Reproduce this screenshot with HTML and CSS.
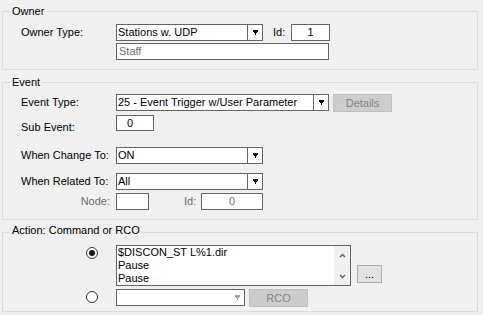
FILE: index.html
```html
<!DOCTYPE html>
<html>
<head>
<meta charset="utf-8">
<link rel="stylesheet" href="styles.css">
</head>
<body>
<div class="page">
  <fieldset class="group owner">
    <legend>Owner</legend>
    <div class="row r-own1">
      <span class="lbl">Owner Type:</span>
      <div class="combo w147"><span class="val">Stations w. UDP</span><span class="dd"><svg width="5" height="5" viewBox="0 0 5 5"><path d="M0 0h5v2h-1v1h-1v2h-1v-2h-1v-1h-1z"/></svg></span></div>
      <span class="lbl-s id1">Id:</span>
      <div class="box idbox">1</div>
    </div>
    <div class="row r-own2">
      <span class="lbl"></span>
      <div class="box staff">Staff</div>
    </div>
  </fieldset>

  <fieldset class="group event">
    <legend>Event</legend>
    <div class="row r-ev1">
      <span class="lbl">Event Type:</span>
      <div class="combo w213"><span class="val">25 - Event Trigger w/User Parameter</span><span class="dd"><svg width="5" height="5" viewBox="0 0 5 5"><path d="M0 0h5v2h-1v1h-1v2h-1v-2h-1v-1h-1z"/></svg></span></div>
      <div class="btn dis details">Details</div>
    </div>
    <div class="row r-ev2">
      <span class="lbl sub">Sub Event:</span>
      <div class="box subbox">0</div>
    </div>
    <div class="row r-ev3">
      <span class="lbl">When Change To:</span>
      <div class="combo w147"><span class="val">ON</span><span class="dd"><svg width="5" height="5" viewBox="0 0 5 5"><path d="M0 0h5v2h-1v1h-1v2h-1v-2h-1v-1h-1z"/></svg></span></div>
    </div>
    <div class="row r-ev4">
      <span class="lbl">When Related To:</span>
      <div class="combo w147"><span class="val">All</span><span class="dd"><svg width="5" height="5" viewBox="0 0 5 5"><path d="M0 0h5v2h-1v1h-1v2h-1v-2h-1v-1h-1z"/></svg></span></div>
    </div>
    <div class="row r-ev5">
      <span class="lbl right gray">Node:</span>
      <div class="box nodebox"></div>
      <span class="lbl-s gray id2">Id:</span>
      <div class="box id2box gray">0</div>
    </div>
  </fieldset>

  <fieldset class="group action">
    <legend>Action: Command or RCO</legend>
    <div class="row r-ac1">
      <span class="radio on"></span>
      <div class="list">
        <div class="lines">
          <div>$DISCON_ST L%1.dir</div>
          <div>Pause</div>
          <div>Pause</div>
        </div>
        <div class="sb">
          <svg width="7" height="5" viewBox="0 0 7 5"><path d="M1 4L3.5 1.5L6 4" fill="none" stroke="#606060" stroke-width="1.4"/></svg>
          <svg width="7" height="5" viewBox="0 0 7 5"><path d="M1 1L3.5 3.5L6 1" fill="none" stroke="#606060" stroke-width="1.4"/></svg>
        </div>
      </div>
      <div class="btn dots">...</div>
    </div>
    <div class="row r-ac2">
      <span class="radio"></span>
      <div class="combo w129 disc"><span class="val"></span><span class="dd"><svg width="5" height="5" viewBox="0 0 5 5"><path d="M0 0h5v2h-1v1h-1v2h-1v-2h-1v-1h-1z"/></svg></span></div>
      <div class="btn dis rco">RCO</div>
    </div>
  </fieldset>
</div>
</body>
</html>
```

FILE: styles.css
```css
html, body {
  margin: 0;
  padding: 0;
  background: #f0f0f0;
}
body {
  font-family: "Liberation Sans", Arial, sans-serif;
  font-size: 11px;
  line-height: 13px;
  color: #000;
  width: 483px;
  height: 315px;
  overflow: hidden;
}
.page {
  padding: 5px 5px 0 2px;
}
.group {
  margin: 0;
  padding: 0;
  border: 1px solid #dcdcdc;
  min-inline-size: 0;
}
.group legend {
  margin-left: 7px;
  padding: 0 2px;
  line-height: 13px;
}
.owner { padding: 6px 0 9px; }
.event { margin-top: 6px; padding: 5px 0 9px; }
.action { margin-top: 4px; padding: 5px 0 4px; }
.action legend { padding-bottom: 3px; }

.row {
  display: flex;
  align-items: flex-start;
  padding-left: 18px;
}
.lbl {
  flex: none;
  width: 95px;
  line-height: 17px;
}
.lbl.right { text-align: right; width: 89px; padding-right: 6px; }
.lbl.sub { padding-top: 6px; line-height: 13px; }
.lbl-s { flex: none; line-height: 17px; }
.gray { color: #6d6d6d; }

.r-own1 { height: 17px; margin-bottom: 2px; }
.r-own2 { height: 17px; }
.r-ev1 { height: 21px; }
.r-ev2 { height: 32px; }
.r-ev3 { height: 26px; }
.r-ev4 { height: 20px; }
.r-ev5 { height: 17px; }

.combo {
  flex: none;
  box-sizing: border-box;
  height: 17px;
  border: 1px solid #646464;
  background: #fff;
  display: flex;
}
.combo .val {
  flex: 1;
  padding-left: 1px;
  line-height: 15px;
  white-space: nowrap;
  overflow: hidden;
}
.combo .dd {
  flex: none;
  width: 14px;
  border-left: 1px solid #646464;
  display: flex;
  align-items: center;
  justify-content: center;
}
.combo .dd svg { shape-rendering: crispEdges; fill: #000; }
.combo.disc .dd { border-left-color: #fff; }
.combo.disc .dd svg { fill: #a0a0a0; }
.w147 { width: 147px; }
.w213 { width: 213px; }
.w129 { width: 129px; }

.box {
  flex: none;
  box-sizing: border-box;
  height: 17px;
  border: 1px solid #646464;
  background: #fff;
  line-height: 15px;
  padding-left: 1px;
}
.id1 { margin-left: 10px; width: 18px; }
.idbox { width: 39px; text-align: center; padding-left: 0; }
.staff { width: 213px; color: #6d6d6d; padding-left: 2px; }
.subbox { width: 38px; height: 16px; line-height: 14px; padding-left: 10px; }
.nodebox { width: 33px; }
.id2 { margin-left: 35px; width: 17px; }
.id2box { width: 62px; text-align: center; padding-left: 0; }

.btn {
  flex: none;
  box-sizing: border-box;
  height: 18px;
  line-height: 16px;
  text-align: center;
}
.btn.dis {
  background: #cccccc;
  border: 1px solid #bfbfbf;
  color: #838383;
}
.details { width: 59px; margin-left: 4px; }
.rco { width: 59px; margin-left: 4px; }
.dots {
  width: 25px;
  margin-left: 6px;
  margin-top: 20px;
  background: #e1e1e1;
  border: 1px solid #adadad;
}

.radio {
  flex: none;
  box-sizing: border-box;
  width: 12px;
  height: 12px;
  border-radius: 50%;
  border: 1px solid #333;
  background: #fff;
  margin-left: 65px;
  margin-right: 18px;
  display: flex;
  align-items: center;
  justify-content: center;
}
.radio.on::after {
  content: "";
  width: 6px;
  height: 6px;
  border-radius: 50%;
  background: #1a1a1a;
}
.r-ac1 { height: 44px; }
.r-ac1 .radio { margin-top: 2px; }
.r-ac2 { height: 18px; }
.r-ac2 .radio { margin-top: 2px; }

.list {
  flex: none;
  box-sizing: border-box;
  width: 235px;
  height: 41px;
  border: 1px solid #646464;
  background: #fff;
  display: flex;
}
.lines {
  flex: 1;
  padding-left: 1px;
  line-height: 13px;
  white-space: nowrap;
}
.sb {
  flex: none;
  width: 16px;
  background: #f0f0f0;
  display: flex;
  flex-direction: column;
  justify-content: space-between;
  align-items: center;
  padding: 7px 0 6px;
  box-sizing: border-box;
}
```
